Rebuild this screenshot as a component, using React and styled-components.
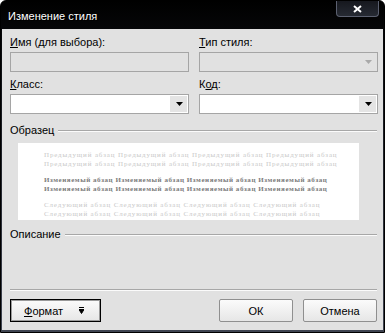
import React from 'react';
import styled, { createGlobalStyle } from 'styled-components';

const GlobalStyle = createGlobalStyle`
  html, body {
    margin: 0;
    padding: 0;
    background: #ffffff;
  }
  body {
    font-family: "Liberation Sans", Arial, sans-serif;
    font-size: 11px;
    color: #000;
  }
`;

const Window = styled.div`
  width: 385px;
  height: 333px;
  box-sizing: border-box;
  display: flex;
  flex-direction: column;
  border: 1px solid #000;
  border-radius: 6px 6px 0 0;
  background: linear-gradient(#000 0%, #15171d 30%, #3f4451 100%);
  overflow: hidden;
`;

const TitleBar = styled.div`
  height: 28px;
  flex: none;
  display: flex;
  justify-content: space-between;
  align-items: flex-start;
`;

const Title = styled.span`
  margin: 9px 0 0 7px;
  font-size: 11px;
  line-height: 13px;
  color: #fff;
  text-shadow: 1px 1px 0 #000;
`;

const CloseButton = styled.div`
  width: 43px;
  height: 16px;
  margin-right: 5px;
  box-sizing: border-box;
  border: 1px solid #5b6070;
  border-top: none;
  border-radius: 0 0 4px 4px;
  background: linear-gradient(#16181e, #262a33);
  display: flex;
  align-items: center;
  justify-content: center;
  svg {
    width: 9px;
    height: 8px;
  }
`;

const Client = styled.div`
  flex: 1;
  margin: 0 1px 2px;
  padding: 7px 6px 8px 8px;
  background: #e1e1e1;
  display: flex;
  flex-direction: column;
`;

const FieldGrid = styled.div`
  display: grid;
  grid-template-columns: 179px 179px;
  column-gap: 10px;
  row-gap: 6px;
`;

const Field = styled.div`
  display: flex;
  flex-direction: column;
  gap: 3px;
`;

const Label = styled.span`
  line-height: 13px;
  height: 13px;
  u {
    text-decoration: underline;
  }
`;

const Combo = styled.div`
  height: 20px;
  box-sizing: border-box;
  border: 1px solid #a5a5a5;
  background: ${p => (p.disabled ? '#e1e1e1' : '#fff')};
  display: flex;
  justify-content: flex-end;
`;

const ComboArrow = styled.div`
  width: 17px;
  margin: 1px;
  background: ${p => (p.disabled ? 'transparent' : '#e4e4e4')};
  display: flex;
  align-items: center;
  justify-content: center;
  svg {
    width: 7px;
    height: 4px;
    margin-left: 1px;
  }
`;

const Section = styled.div`
  display: flex;
  align-items: center;
  margin-top: ${p => p.top}px;
  height: 13px;
  line-height: 13px;
`;

const Rule = styled.div`
  flex: 1;
  height: 0;
  margin-left: 4px;
  border-top: 1px solid #a7a7a7;
  border-bottom: 1px solid #fbfbfb;
`;

const Separator = styled.div`
  flex: none;
  height: 0;
  border-top: 1px solid #a7a7a7;
  border-bottom: 1px solid #fbfbfb;
`;

const Preview = styled.div`
  width: 341px;
  height: 77px;
  margin: 6px 0 0 8px;
  box-sizing: border-box;
  padding: 8px 0 0 26px;
  background: #fff;
  font-family: "Liberation Serif", "Times New Roman", serif;
  font-size: 7px;
  letter-spacing: 0.85px;
  white-space: nowrap;
  overflow: hidden;
`;

const Para = styled.div`
  line-height: 8.7px;
  margin-bottom: ${p => p.after || 0}px;
  color: ${p => (p.current ? '#7b7b7b' : '#c8c8c8')};
  font-weight: ${p => (p.current ? 'bold' : 'normal')};
  letter-spacing: ${p => (p.current ? '0.55px' : 'inherit')};
`;

const Spacer = styled.div`
  flex: 1;
`;

const ButtonRow = styled.div`
  display: flex;
  align-items: center;
  margin-top: 8px;
  gap: 10px;
`;

const Button = styled.div`
  width: ${p => p.w}px;
  height: 23px;
  box-sizing: border-box;
  border: 1px solid ${p => (p.primary ? '#000' : '#8f8f8f')};
  border-radius: ${p => (p.primary ? '0' : '2px')};
  background: linear-gradient(#fbfbfb, #e6e6e6);
  box-shadow: ${p => (p.primary ? 'inset 0 0 0 1px #9a9a9a' : 'none')};
  display: flex;
  align-items: center;
  justify-content: ${p => (p.primary ? 'flex-start' : 'center')};
  padding-left: ${p => (p.primary ? 13 : 0)}px;
  gap: 16px;
  u {
    text-decoration: underline;
  }
  svg {
    width: 5px;
    height: 7px;
  }
`;

const Push = styled.div`
  margin-left: auto;
`;

const Triangle = ({ color }) => (
  <svg viewBox="0 0 7 4">
    <path d="M0 0H7L3.5 4Z" fill={color} />
  </svg>
);

const prev = 'Предыдущий абзац Предыдущий абзац Предыдущий абзац Предыдущий абзац';
const cur = 'Изменяемый абзац Изменяемый абзац Изменяемый абзац Изменяемый абзац';
const next = 'Следующий абзац Следующий абзац Следующий абзац Следующий абзац';

export default function App() {
  return (
    <>
      <GlobalStyle />
      <Window>
        <TitleBar>
          <Title>Изменение стиля</Title>
          <CloseButton>
            <svg viewBox="0 0 9 8">
              <path d="M1 1L8 7M8 1L1 7" stroke="#fff" strokeWidth="2" />
            </svg>
          </CloseButton>
        </TitleBar>
        <Client>
          <FieldGrid>
            <Field>
              <Label>
                <u>И</u>мя (для выбора):
              </Label>
              <Combo disabled />
            </Field>
            <Field>
              <Label>
                <u>Т</u>ип стиля:
              </Label>
              <Combo disabled>
                <ComboArrow disabled>
                  <Triangle color="#a9a9a9" />
                </ComboArrow>
              </Combo>
            </Field>
            <Field>
              <Label>
                <u>К</u>ласс:
              </Label>
              <Combo>
                <ComboArrow>
                  <Triangle color="#000" />
                </ComboArrow>
              </Combo>
            </Field>
            <Field>
              <Label>
                К<u>о</u>д:
              </Label>
              <Combo>
                <ComboArrow>
                  <Triangle color="#000" />
                </ComboArrow>
              </Combo>
            </Field>
          </FieldGrid>

          <Section top={10}>
            Образец
            <Rule />
          </Section>
          <Preview>
            <Para>{prev}</Para>
            <Para after={8}>{prev}</Para>
            <Para current>{cur}</Para>
            <Para current after={7}>{cur}</Para>
            <Para>{next}</Para>
            <Para>{next}</Para>
          </Preview>

          <Section top={8}>
            Описание
            <Rule />
          </Section>

          <Spacer />
          <Separator />

          <ButtonRow>
            <Button primary w={91}>
              <span>
                <u>Ф</u>ормат
              </span>
              <svg viewBox="0 0 5 7">
                <path d="M0 0.5H5M0 2.5H5L2.5 6.5Z" stroke="#000" strokeWidth="1" fill="#000" />
              </svg>
            </Button>
            <Push />
            <Button w={74}>ОК</Button>
            <Button w={74}>Отмена</Button>
          </ButtonRow>
        </Client>
      </Window>
    </>
  );
}
